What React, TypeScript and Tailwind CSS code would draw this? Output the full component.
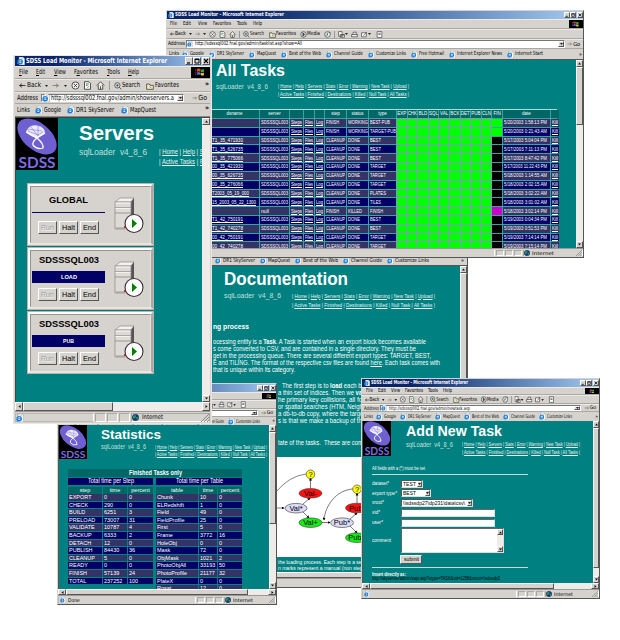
import React, { useLayoutEffect, useRef, useState } from "react";

type Kids = { children?: React.ReactNode; className?: string };

/* A single line of text condensed or stretched to the width of its box. */
function Fit({ className = "", children }: Kids) {
  const box = useRef<HTMLSpanElement>(null);
  const text = useRef<HTMLSpanElement>(null);
  const [scale, setScale] = useState(1);
  useLayoutEffect(() => {
    if (box.current && text.current) {
      setScale(box.current.getBoundingClientRect().width / text.current.getBoundingClientRect().width);
    }
  }, []);
  return (
    <span ref={box} className={`flex shrink-0 items-center leading-none whitespace-nowrap ${className}`}>
      <span ref={text} className="inline-block shrink-0 origin-left" style={{ transform: `scaleX(${scale})` }}>
        {children}
      </span>
    </span>
  );
}

function IE({ className = "size-[7px]" }: { className?: string }) {
  return (
    <svg viewBox="0 0 10 10" className={`shrink-0 ${className}`}>
      <path d="M2.500 0h5l2.200 2.200V10H2.500z" fill="#fff" stroke="#777" strokeWidth=".6" />
      <circle cx="4" cy="5.800" r="2.600" fill="none" stroke="#1a7cd8" strokeWidth="1.700" />
      <path d="M2 5.900h4.500" stroke="#1a7cd8" strokeWidth="1.100" />
      <path d="M.3 8.700C2 3 5.500 1.800 8 2.500" fill="none" stroke="#49a4ea" strokeWidth=".8" />
    </svg>
  );
}

function Globe({ className = "size-[7px]" }: { className?: string }) {
  return (
    <svg viewBox="0 0 10 10" className={`shrink-0 ${className}`}>
      <circle cx="5" cy="5" r="4.6" fill="#1030b8" />
      <path d="M1 3l3-2 2 2-2 3-2 1zM6 5l3-1v3L7 9z" fill="#28a828" />
      <circle cx="5" cy="5" r="4.6" fill="none" stroke="#112" strokeWidth=".6" />
    </svg>
  );
}

function SdssLogo({ className }: { className: string }) {
  return (
    <div className={`relative shrink-0 bg-black ${className}`}>
      <svg viewBox="0 0 42 52" preserveAspectRatio="none" className="size-full">
        <ellipse cx="21" cy="18.500" rx="23" ry="13.5" transform="rotate(40 21 18.500)" fill="#6f60d2" />
        <path d="M10 14Q13 6 21 7.500T29 15L21 20Q15 19 10 14z" fill="#ece9ff" />
        <path d="M10 14l11 6 8-5M21 20q-5 4-4 7 4 5 10 3 1-4-6-10z" fill="none" stroke="#fff" strokeWidth="1.300" />
        <path d="M12 13l10 4 5-3M15 9l7 9M22 8l0 10M11 11l15 2" stroke="#8173d0" strokeWidth=".6" fill="none" />
        <text x="2.5" y="50" textLength="37" lengthAdjust="spacingAndGlyphs" fontFamily="Lato, Liberation Sans, sans-serif" fontWeight="bold" fontSize="15.500" fill="#7b6cdf">SDSS</text>
      </svg>
    </div>
  );
}

function ArrowIcon({ flip = false, className = "w-[6px] h-[5px]" }: { flip?: boolean; className?: string }) {
  return (
    <svg viewBox="0 0 12 8" className={`shrink-0 ${flip ? "rotate-180" : ""} ${className}`}>
      <path d="M5 1L1 4l4 3M1 4h10" fill="none" stroke={flip ? "#777" : "#222"} strokeWidth="1.5" />
    </svg>
  );
}

const glyphs: Record<string, React.ReactNode> = {
  stop: <><circle cx="6" cy="6" r="4.8" fill="#eee" /><path d="M4 4l4 4M8 4L4 8" /></>,
  page: <><path d="M2 1h6l2 2v8H2z" fill="#fff" /><path d="M4 4h4M4 6h2M6 9l2-2" stroke="#26723e" /></>,
  home: <><path d="M1 6l5-5 5 5M3 5v6h6V5" fill="#f4f4e6" /><path d="M6 7v4" /></>,
  search: <><circle cx="5" cy="5" r="4" fill="#dceaf2" /><path d="M3 5h4M5 3v4M8 8l3 3" /></>,
  fav: <><path d="M1 3h4l1 2h5v6H1z" fill="#efeec4" /><path d="M5 7l3 2" stroke="#777" /></>,
  media: <><circle cx="6" cy="6" r="4.8" fill="#d5e9e4" /><path d="M5 3l3 3-3 3z" fill="#344" /></>,
  history: <><circle cx="6" cy="6" r="4.8" fill="#e8f3ee" /><path d="M6 3v4H3M9 1l2 3" /></>,
  mail: <><path d="M1 1h6v8H1zM4 6h7v5H4zM4 6l3 3 4-3" fill="#fff" /></>,
  print: <><path d="M1 6h10v4H1zM3 6l1-4h5v4" fill="#eee" /></>,
  edit: <><path d="M1 3h8v7H1zM4 8l6-6" fill="#fff" /></>,
  discuss: <><path d="M2 1h8v10H2zM4 4h4M4 6h4" fill="#fff" /></>,
};

function Glyph({ n, className = "size-[7px]" }: { n: string; className?: string }) {
  return (
    <svg viewBox="0 0 12 12" fill="none" stroke="#333" strokeWidth="1.1" className={`shrink-0 ${className}`}>
      {glyphs[n]}
    </svg>
  );
}

function Drop() {
  return (
    <svg viewBox="0 0 6 4" className="h-[2px] w-[3px] shrink-0">
      <path d="M0 0h6L3 4z" fill="#222" />
    </svg>
  );
}

function Bevel({ className = "", children }: Kids) {
  return (
    <span className={`flex shrink-0 items-center justify-center border border-t-white border-l-white border-r-[#555] border-b-[#555] bg-[#d6d3ce] ${className}`}>
      {children}
    </span>
  );
}

function Tri({ dir, className = "size-[3px]" }: { dir: "u" | "d" | "l" | "r"; className?: string }) {
  const d = { u: "M0 5h6L3 1z", d: "M0 1h6L3 5z", l: "M5 0v6L1 3z", r: "M1 0v6l4-3z" }[dir];
  return (
    <svg viewBox="0 0 6 6" className={`shrink-0 ${className}`}>
      <path d={d} fill="#111" />
    </svg>
  );
}

function WindowButtons({ big }: { big?: boolean }) {
  const c = big ? "h-[8px] w-[8px]" : "h-[6px] w-[6px]";
  return (
    <div className="ml-auto flex shrink-0">
      <Bevel className={c}><svg viewBox="0 0 6 6" className="size-full"><path d="M1 5h3" stroke="#000" strokeWidth="1.2" /></svg></Bevel>
      <Bevel className={c}><svg viewBox="0 0 6 6" className="size-full"><path d="M1 1h4v4H1zM1 1.5h4" fill="none" stroke="#000" strokeWidth=".9" /></svg></Bevel>
      <Bevel className={`ml-px ${c}`}><svg viewBox="0 0 6 6" className="size-full"><path d="M1 1l4 4M5 1L1 5" stroke="#000" strokeWidth="1.1" /></svg></Bevel>
    </div>
  );
}

function Flag({ className }: { className: string }) {
  return (
    <div className={`ml-auto flex shrink-0 items-center justify-center bg-black ${className}`}>
      <svg viewBox="0 0 10 8" className="h-[75%]">
        <path d="M2 1q1.5-1 3 0v2.6q-1.500-1-3 0z" fill="#e0502c" />
        <path d="M5.500 1q1.500 1 3.200 0v2.600q-1.700 1-3.200 0z" fill="#3fa247" />
        <path d="M2 4.300q1.500-1 3 0v2.600q-1.500-1-3 0z" fill="#4472dd" />
        <path d="M5.500 4.300q1.500 1 3.200 0v2.600q-1.700 1-3.200 0z" fill="#e8c030" />
        <path d="M0 2h1.500M0 4h1.500M0 6h1.500" stroke="#b44" strokeWidth=".8" />
      </svg>
    </div>
  );
}

const rowLine = "flex shrink-0 items-center border-b border-b-[#aaa8a2] border-t border-t-[#eceae6] overflow-hidden";
const gradient = "flex shrink-0 items-center bg-linear-to-r from-[#0a246a] from-20% to-[#a6caf0]";
const frame = "absolute flex flex-col overflow-hidden border border-[#d6d3ce] border-r-[#555] border-b-[#555] bg-[#d6d3ce] font-['DejaVu_Sans_Condensed','DejaVu_Sans',sans-serif] text-black";

function SmallMenu({ className }: { className: string }) {
  return (
    <div className={`${rowLine} text-[5.500px] ${className}`}>
      <Fit className="w-[7px]">File</Fit>
      <Fit className="w-[8px]">Edit</Fit>
      <Fit className="w-[9px]">View</Fit>
      <Fit className="w-[18px]">Favorites</Fit>
      <Fit className="w-[10px]">Tools</Fit>
      <Fit className="w-[9px]">Help</Fit>
      <Flag className="h-full w-[14px]" />
    </div>
  );
}

function SmallToolbar({ className, squeeze = "" }: { className: string; squeeze?: string }) {
  return (
    <div className={`${rowLine} pl-[3px] text-[5.500px] ${className}`}>
      <div className={`flex shrink-0 origin-left items-center ${squeeze}`}>
        <ArrowIcon className="h-[4px] w-[5px]" />
        <Fit className="w-[11px]">Back</Fit>
        <span className="w-[3px]" /><Drop /><span className="w-[3px]" />
        <ArrowIcon flip className="h-[4px] w-[5px]" />
        <span className="w-[3px]" /><Drop /><span className="w-[3px]" />
        <Glyph n="stop" /><span className="w-[3px]" />
        <Glyph n="page" /><span className="w-[3px]" />
        <Glyph n="home" />
        <span className="mx-[3px] h-[7px] w-px bg-[#999]" />
        <Glyph n="search" /><Fit className="w-[14px]">Search</Fit><span className="w-[5px]" />
        <Glyph n="fav" /><Fit className="w-[20px]">Favorites</Fit><span className="w-[4px]" />
        <Glyph n="media" /><Fit className="w-[13px]">Media</Fit><span className="w-[4px]" />
        <Glyph n="history" />
        <span className="mx-[3px] h-[7px] w-px bg-[#999]" />
        <Glyph n="mail" /><Drop /><span className="w-[3px]" />
        <Glyph n="print" /><span className="w-[3px]" />
        <Glyph n="edit" /><Drop /><span className="w-[5px]" />
        <Glyph n="discuss" />
      </div>
    </div>
  );
}

function AddressRow({ className, url, label, input, go }: { className: string; url: React.ReactNode; label: string; input: string; go: string }) {
  return (
    <div className={`${rowLine} ${className}`}>
      <Fit className={label}>Address</Fit>
      <div className="ml-px flex h-[88%] min-w-0 grow items-center border border-r-white border-b-white border-t-[#777] border-l-[#777] bg-white">
        <IE className={input} />
        {url}
        <Bevel className="ml-auto h-full w-[6px]"><Drop /></Bevel>
      </div>
      <div className={`flex shrink-0 items-center justify-end gap-px pr-[3px] ${go}`}>
        <ArrowIcon flip className="h-[4px] w-[5px] -rotate-45" />
        <span>Go</span>
      </div>
    </div>
  );
}

function Link({ w, children, icon }: { w: string; children: string; icon?: string }) {
  return (
    <span className="flex shrink-0 items-center gap-px">
      <IE className={icon} />
      <Fit className={w}>{children}</Fit>
    </span>
  );
}

function VScroll({ className, thumb }: { className: string; thumb?: string }) {
  return (
    <div className={`flex shrink-0 flex-col bg-[#eeece8] ${className}`}>
      <Bevel className="h-[7px] w-full"><Tri dir="u" /></Bevel>
      {thumb && <Bevel className={`w-full ${thumb}`} />}
      <Bevel className="mt-auto h-[7px] w-full"><Tri dir="d" /></Bevel>
    </div>
  );
}

function HScroll({ className, thumb }: { className: string; thumb: string }) {
  return (
    <div className={`flex shrink-0 bg-[#eeece8] ${className}`}>
      <Bevel className="h-full w-[8px]"><Tri dir="l" /></Bevel>
      <Bevel className={`h-full ${thumb}`} />
      <Bevel className="ml-auto h-full w-[8px]"><Tri dir="r" /></Bevel>
    </div>
  );
}

function Status({ className, zone, text, done = "" }: { className: string; zone: string; text: string; done?: string }) {
  return (
    <div className={`flex shrink-0 items-stretch gap-px border-t border-t-[#999] py-px text-[5px] leading-none ${className}`}>
      <div className="flex grow items-center gap-[2px] border-x border-[#bbb8b2] border-r-white pl-px"><IE className="size-[6px]" />{done}</div>
      <div className="w-[8px] border border-[#aaa8a2] border-r-white border-b-white" />
      <div className="w-[8px] border border-[#aaa8a2] border-r-white border-b-white" />
      <div className="w-[8px] border border-[#aaa8a2] border-r-white border-b-white" />
      <div className={`flex items-center gap-[2px] border-x border-[#aaa8a2] border-r-white ${zone}`}>
        <Globe className="size-[6px]" />
        <Fit className={text}>Internet</Fit>
        <svg viewBox="0 0 8 8" className="ml-auto size-[6px]"><path d="M8 0L0 8M8 3L3 8M8 6L6 8" stroke="#888" /></svg>
      </div>
    </div>
  );
}

function Nav({ w, row }: { w: string; row: string }) {
  const u = "underline decoration-[0.5px]";
  const names1 = ["Home", "Help", "Servers", "Stats", "Error", "Warning", "New Task", "Upload"];
  const names2 = ["Active Tasks", "Finished", "Destinations", "Killed", "Null Task", "All Tasks"];
  return (
    <div className="text-[#e6f6f4]">
      {[names1, names2].map((names) => (
        <Fit key={names[0]} className={`${w} ${row}`}>
          |{names.map((n) => <span key={n}> <span className={u}>{n}</span> |</span>)}
        </Fit>
      ))}
    </div>
  );
}

const page = "min-w-0 grow overflow-hidden bg-[#008080] font-['Liberation_Sans',Arial,sans-serif] text-white";

/* ---------- All Tasks ---------- */

const taskCols = "grid grid-cols-[49px_29px_13px_10px_9px_21px_21px_27px_repeat(10,9.6px)_47px_8px] gap-x-px";
const tasks = [
  ["", "SDSSSQL003", "FINISH", "WORKING", "BEST-PUB", "5/20/2003 1:58:13 PM"],
  ["", "SDSSSQL003", "FINISH", "WORKING", "TARGET-PUB", "5/20/2003 0:21:43 AM"],
  ["T1_35_471930", "SDSSSQL003", "CLEANUP", "DONE", "BEST", "5/17/2003 5:04:04 PM"],
  ["T1_35_626735", "SDSSSQL003", "CLEANUP", "DONE", "BEST", "5/17/2003 7:11:13 PM"],
  ["T1_35_775066", "SDSSSQL003", "CLEANUP", "DONE", "BEST", "5/17/2003 8:47:42 PM"],
  ["00_35_421930", "SDSSSQL003", "CLEANUP", "DONE", "TARGET", "5/17/2003 11:22:43 PM"],
  ["00_35_626735", "SDSSSQL003", "CLEANUP", "DONE", "TARGET", "5/18/2003 1:14:55 AM"],
  ["00_35_276066", "SDSSSQL003", "CLEANUP", "DONE", "TARGET", "5/18/2003 2:02:15 AM"],
  ["T2003_05_19_000", "SDSSSQL003", "CLEANUP", "DONE", "PLATES", "5/18/2003 3:02:22 AM"],
  ["15_2003_05_22_1300", "SDSSSQL003", "CLEANUP", "DONE", "TILES", "5/18/2003 3:01:02 AM"],
  ["", "null", "FINISH", "KILLED", "FINISH", "5/18/2003 3:02:14 PM"],
  ["T1_42_750191", "SDSSSQL003", "CLEANUP", "DONE", "BEST", "5/19/2003 0:04:34 PM"],
  ["T1_42_740278", "SDSSSQL003", "CLEANUP", "DONE", "BEST", "5/19/2003 0:51:53 PM"],
  ["00_42_750191", "SDSSSQL003", "CLEANUP", "DONE", "TARGET", "5/19/2003 7:14:14 PM"],
  ["00_42_740278", "SDSSSQL003", "CLEANUP", "DONE", "TARGET", "5/19/2003 7:15:14 PM"],
];

function AllTasks() {
  const cell = "overflow-hidden whitespace-nowrap pl-px";
  return (
    <div className={`${frame} left-[166px] top-[10px] h-[248px] w-[418px] text-[5.500px]`}>
      <div className={`${gradient} h-[8px] pl-px`}>
        <IE className="size-[6px]" />
        <Fit className="ml-px w-[109px] font-bold text-white">SDSS Load Monitor - Microsoft Internet Explorer</Fit>
        <WindowButtons />
      </div>
      <SmallMenu className="h-[10px] gap-[6.300px] pl-[3px]" />
      <SmallToolbar className="h-[10px]" />
      <AddressRow className="h-[10px] pl-px" label="w-[17px]" input="size-[6px]" go="w-[18px] text-[5.500px]"
        url={<Fit className="ml-[2px] w-[107px]">http://sdsssql002.fnal.gov/admin/tasklist.asp?show=All</Fit>} />
      <div className="flex h-[10px] shrink-0 items-center gap-[5px] pl-[2px]">
        <Fit className="w-[10px]">Links</Fit>
        <span className="ml-[-2px]"><Link w="w-[14px]">Google</Link></span>
        <Link w="w-[27px]">DR1 SkyServer</Link>
        <Link w="w-[19px]">MapQuest</Link>
        <Link w="w-[32px]">Best of the Web</Link>
        <Link w="w-[29px]">Channel Guide</Link>
        <Link w="w-[30px]">Customize Links</Link>
        <Link w="w-[25px]">Free Hotmail</Link>
        <Link w="w-[45px]">Internet Explorer News</Link>
        <Link w="w-[28px]">Internet Start</Link>
        <span className="ml-auto pr-px">»</span>
      </div>
      <div className="flex min-h-0 grow border-t border-l border-[#555]">
        <div className={page}>
          <div className="ml-[48px] pt-[1px]">
            <Fit className="h-[18px] w-[69px] text-[16.500px] font-bold">All Tasks</Fit>
            <div className="mt-[4px] flex text-[5.500px]">
              <Fit className="mr-[10px] h-[7px] w-[52px] text-[7px] text-[#c0e0dc]">sqlLoader&nbsp; v4_8_6</Fit>
              <Nav w="w-[131px]" row="h-[8px]" />
            </div>
          </div>
          <div className="ml-[42px] mt-[10px] w-[347px] border-t border-[#a9dcd4] bg-[#35a5a0] text-[5px] leading-[8px]">
            <div className={`${taskCols} h-[8px] text-center text-[4.500px]`}>
              {["dsname", "server", "", "", "", "step", "status", "type", "EXP", "CHK", "BLD", "SQL", "VAL", "BCK", "DET", "PUB", "CLN", "FIN", "date", ""].map((h, i) => (
                <div key={i} className="bg-[#006666]">{h}</div>
              ))}
            </div>
            {tasks.map((t, i) => {
              const c = `${cell} ${i % 2 ? "bg-[#000066]" : "bg-[#333366]"}`;
              const last = i < 2 ? "bg-[#00ff00]" : i === 10 ? "bg-[#cc00cc]" : "bg-black";
              const nameWidth = t[0].length > 15 ? "w-[44px]" : t[0].length > 12 ? "w-[37px]" : "w-[31px]";
              return (
                <div key={i} className={`${taskCols} h-[8.820px] pt-px`}>
                  <div className={c}>{t[0] && <Fit className={`ml-px h-full underline decoration-[0.5px] ${nameWidth}`}>{t[0]}</Fit>}</div>
                  <div className={c}><Fit className={i === 10 ? "h-full w-[8px]" : "h-full w-[27px]"}>{t[1]}</Fit></div>
                  <div className={c}><Fit className="h-full w-[11px] underline">Steps</Fit></div>
                  <div className={c}><Fit className="h-full w-[8px] underline">Files</Fit></div>
                  <div className={c}><Fit className="h-full w-[7px] underline">Log</Fit></div>
                  <div className={c}><Fit className={i < 2 || i === 10 ? "h-full w-[13px]" : "h-full w-[19px]"}>{t[2]}</Fit></div>
                  <div className={c}><Fit className={i < 2 ? "h-full w-[20px]" : i === 10 ? "h-full w-[14px]" : "h-full w-[12px]"}>{t[3]}</Fit></div>
                  <div className={c}><Fit className={i === 1 ? "h-full w-[26px]" : i === 0 ? "h-full w-[20px]" : t[4] === "BEST" || t[4] === "TILES" ? "h-full w-[11px]" : i === 10 ? "h-full w-[13px]" : "h-full w-[16px]"}>{t[4]}</Fit></div>
                  {Array.from({ length: 9 }, (_, k) => (
                    <div key={k} className="bg-[#00ff00] outline-[0.5px] outline-[#8b91c8]" />
                  ))}
                  <div className={last} />
                  <div className={c}><Fit className="h-full w-[43px]">{t[5]}</Fit></div>
                  <div className={c}><Fit className="h-full w-[6px] underline">Kill</Fit></div>
                </div>
              );
            })}
          </div>
        </div>
        <VScroll className="w-[7px]" thumb="h-[58px]" />
      </div>
      <Status className="h-[9px]" zone="w-[60px]" text="w-[22px]" />
    </div>
  );
}

/* ---------- Documentation ---------- */

function Oval({ x, y, fill, label, rx = 11.5, ry = 4.8 }: { x: number; y: number; fill: string; label: string; rx?: number; ry?: number }) {
  return (
    <g>
      <ellipse cx={x} cy={y} rx={rx} ry={ry} fill={fill} stroke="#333" strokeWidth=".6" />
      <text x={x} y={y + 2.7} textAnchor="middle" fontSize="7.500" fontFamily="Liberation Sans, sans-serif" fill="#000">{label}</text>
    </g>
  );
}

function Documentation() {
  const line = "h-[7px]";
  return (
    <div className={`${frame} left-[209px] top-[250px] h-[338px] w-[259px] text-[5.500px]`}>
      <div className="mt-[5px] flex h-[9px] shrink-0 items-center gap-[5px] pl-[5px]">
        <Link w="w-[32px]">DR1 SkyServer</Link>
        <Link w="w-[22px]">MapQuest</Link>
        <Link w="w-[35px]">Best of the Web</Link>
        <Link w="w-[31px]">Channel Guide</Link>
        <Link w="w-[34px]">Customize Links</Link>
        <span className="ml-auto pr-[3px]">»</span>
      </div>
      <div className="flex min-h-0 grow border-t border-[#555]">
        <div className={page}>
          <div className="ml-[14px] pt-[4px]">
            <Fit className="h-[19px] w-[124px] text-[17.500px] font-bold">Documentation</Fit>
            <div className="mt-[2px] flex text-[6px]">
              <Fit className="mr-[11px] h-[9px] w-[57px] text-[8px] text-[#c0e0dc]">sqlLoader&nbsp; v4_8_6</Fit>
              <Nav w="w-[143px]" row="h-[9px]" />
            </div>
          </div>
          <div className="ml-[3px] mt-[13px] text-[6.500px]">
            <Fit className="h-[8px] w-[36px] text-[7px] font-bold">ng process</Fit>
            <div className="mt-[9px]">
              <Fit className={`w-[213px] ${line}`}><span>ocessing entity is a <b>Task</b>. A Task is started when an export block becomes available</span></Fit>
              <Fit className={`w-[203px] ${line}`}>s come converted to CSV, and are contained in a single directory. They must be</Fit>
              <Fit className={`w-[218px] ${line}`}>get in the processing queue. There are several different export types: TARGET, BEST,</Fit>
              <Fit className={`w-[227px] ${line}`}><span>E and TILING. The format of the respective csv files are found <u>here</u>. Each task comes with</span></Fit>
              <Fit className={`w-[82px] ${line}`}>that is unique within its category.</Fit>
            </div>
            <div className="ml-[65px] mt-[9px]">
              <Fit className={`ml-[4px] w-[90px] ${line}`}><span>The first step is to <b>load</b> each block</span></Fit>
              <Fit className={`w-[91px] ${line}`}><span>a thin set of indices. Then we <b>valid</b></span></Fit>
              <Fit className={`w-[91px] ${line}`}>he primary key collisions, all forei</Fit>
              <Fit className={`w-[88px] ${line}`}>or spatial searches (HTM, Neighb</Fit>
              <Fit className={`w-[87px] ${line}`}>a db-to-db copy, where the target</Fit>
              <Fit className={`w-[87px] ${line}`}>s is that we make a backup of the</Fit>
              <Fit className={`mt-[15px] w-[88px] ${line}`}>tate of the tasks.&nbsp; These are comp</Fit>
            </div>
          </div>
          <div className="mt-[10px] flex h-[100px] bg-white pl-[66px]">
            <svg viewBox="276 456 100 100" className="h-[100px] w-[100px]">
              <defs>
                <marker id="tip" viewBox="0 0 6 6" refX="5" refY="3" markerWidth="5" markerHeight="5" orient="auto"><path d="M0 0l6 3-6 3z" /></marker>
              </defs>
              <g fill="none" stroke="#222" strokeWidth=".6" markerEnd="url(#tip)">
                <path d="M276 507h8" /><path d="M303 503l7-6" /><path d="M303 511l6 6" /><path d="M310.500 487v-10" />
                <path d="M322 521.500h8" /><path d="M350 518l7-6" /><path d="M350 525l7 7" /><path d="M357 502v-10" />
                <path d="M353 488C336 489 325 505 324 519" />
              </g>
              <path d="M306 473Q289 475 276 491" fill="none" stroke="#333" strokeWidth=".6" />
              <Oval x={310.5} y={473.3} fill="#ffff00" label="?" rx={4.3} ry={4.3} />
              <Oval x={310.5} y={492.3} fill="#ff1010" label="Val-" />
              <Oval x={296} y={507.2} fill="#dcdcfa" label="Val*" rx={11} />
              <Oval x={310.5} y={521.7} fill="#12ee12" label="Val+" />
              <Oval x={342} y={521.7} fill="#dcdcfa" label="Pub*" />
              <Oval x={357} y={507} fill="#ff1010" label="Pub-" />
              <Oval x={357} y={488.3} fill="#ffff00" label="?" rx={4.3} ry={4.3} />
              <Oval x={357} y={536.7} fill="#12ee12" label="Pub+" />
            </svg>
          </div>
          <div className="ml-[68px] pt-[2px] text-[6px]">
            <Fit className="h-[6px] w-[86px]">the loading process. Each step is a sec</Fit>
            <Fit className="h-[6px] w-[86px]">n marks represent a manual (non step,</Fit>
          </div>
        </div>
        <VScroll className="w-[7px]" thumb="h-[210px]" />
      </div>
      <HScroll className="h-[6px]" thumb="w-[170px]" />
      <Status className="h-[9px]" zone="w-[60px]" text="w-[22px]" />
    </div>
  );
}

/* ---------- Statistics ---------- */

const stepStats = ["EXPORT 0 0", "CHECK 290 0", "BUILD 6251 3", "PRELOAD 73007 31", "VALIDATE 10787 4", "BACKUP 6333 2", "DETACH 12 0", "PUBLISH 84430 36", "CLEANUP 5 0", "READY 0 0", "FINISH 57139 24", "TOTAL 237252 100"];
const tableStats = ["Chunk 10 0", "ELRedshift 1 0", "Field 49 0", "FieldProfile 25 0", "First 5 0", "Frame 3772 16", "HoleObj 0 0", "Mask 72 0", "ObjMask 1021 2", "PhotoObjAll 33193 50", "PhotoProfile 21177 32", "PlateX 0 0", "Rosat 12 0"];

function StatTable({ title, cols, head, rows }: { title: React.ReactNode; cols: string; head: string[]; rows: string[] }) {
  return (
    <div>
      <div className="flex h-[7px] justify-center bg-[#000066] text-[6.500px]">{title}</div>
      <div className={`mt-[2px] grid h-[7px] gap-px text-center text-[5.500px] leading-[7px] ${cols}`}>
        {head.map((h) => <div key={h} className="bg-[#006666]">{h}</div>)}
      </div>
      <div>
        {rows.map((r, i) => (
          <div key={r} className={`grid h-[7.610px] gap-px pb-px text-[5.500px] leading-[6.500px] ${cols}`}>
            {r.split(" ").map((v, k) => (
              <div key={k} className={`pl-px ${i % 2 ? "bg-[#000066]" : "bg-[#333366]"}`}>{v}</div>
            ))}
          </div>
        ))}
      </div>
    </div>
  );
}

function Statistics() {
  return (
    <div className={`${frame} left-[57px] top-[383px] h-[222px] w-[220px] text-[5px]`}>
      <div className={`${gradient} h-[8px] pl-px`}>
        <IE className="size-[6px]" />
        <Fit className="ml-px w-[98px] font-bold text-white">SDSS Load Monitor - Microsoft Internet Explorer</Fit>
        <WindowButtons />
      </div>
      <SmallMenu className="h-[8px] gap-[5px] pl-[3px]" />
      <SmallToolbar className="h-[9px]" squeeze="scale-x-[0.870]" />
      <AddressRow className="h-[8px] pl-px" label="w-[15px]" input="size-[6px]" go="w-[18px] text-[5px]"
        url={<Fit className="ml-[2px] w-[85px]">http://sdsssql002.fnal.gov/admin/stats.asp</Fit>} />
      <div className="flex h-[8px] shrink-0 items-center gap-[4px] pl-[2px]">
        <Fit className="w-[9px]">Links</Fit>
        <Link w="w-[11px]">Google</Link>
        <Link w="w-[23px]">DR1 SkyServer</Link>
        <Link w="w-[17px]">MapQuest</Link>
        <Link w="w-[24px]">Best of the Web</Link>
        <Link w="w-[20px]">Channel Guide</Link>
        <Link w="w-[24px]">Customize Links</Link>
        <span className="ml-auto pr-px">»</span>
      </div>
      <div className="flex min-h-0 grow border-l border-[#555]">
        <div className={page}>
          <div className="flex">
            <SdssLogo className="h-[34px] w-[28px]" />
            <div className="ml-[14px] pt-[2px]">
              <Fit className="h-[16px] w-[60px] text-[13.500px] font-bold">Statistics</Fit>
              <div className="mt-[1px] flex text-[5px]">
                <Fit className="mr-[9px] h-[7px] w-[45px] text-[6.500px] text-[#c0e0dc]">sqlLoader&nbsp; v4_8_6</Fit>
                <Nav w="w-[112px]" row="h-[7px]" />
              </div>
            </div>
          </div>
          <div className="ml-[9px] mt-[10px] w-[174px]">
            <div className="flex h-[8px] justify-center bg-[#006666] text-[6.500px] font-bold"><Fit className="w-[53px]">Finished Tasks only</Fit></div>
            <div className="mt-px flex gap-[3px]">
              <StatTable title={<Fit className="w-[46px]">Total time per Step</Fit>} cols="grid-cols-[34px_24px_25px]" head={["step", "time", "percent"]} rows={stepStats} />
              <StatTable title={<Fit className="w-[47px]">Total time per Table</Fit>} cols="grid-cols-[42px_18px_24px]" head={["table", "time", "percent"]} rows={tableStats} />
            </div>
          </div>
        </div>
        <VScroll className="w-[7px]" thumb="h-[92px]" />
      </div>
      <HScroll className="h-[6px]" thumb="w-[182px]" />
      <Status className="h-[9px]" zone="w-[52px]" text="w-[20px]" done="Done" />
    </div>
  );
}

/* ---------- Add New Task ---------- */

function Select({ className, children }: Kids) {
  return (
    <div className={`flex h-[8px] shrink-0 items-center border border-[#555] border-r-[#ddd] border-b-[#ddd] bg-white pl-px text-black ${className}`}>
      {children}
      <Bevel className="ml-auto h-full w-[5px]"><Drop /></Bevel>
    </div>
  );
}

function Field({ w, label, h, children }: { w: string; label: string; h: string; children: React.ReactNode }) {
  return (
    <div className={`flex items-center ${h}`}>
      <div className="w-[29px] shrink-0"><Fit className={w}>{label}</Fit></div>
      {children}
    </div>
  );
}

function AddNewTask() {
  const input = "h-[8px] w-[94px] border border-[#666] border-r-[#ddd] border-b-[#ddd] bg-white";
  return (
    <div className={`${frame} left-[361px] top-[378px] h-[221px] w-[239px] text-[5px]`}>
      <div className={`${gradient} h-[8px] pl-[2px]`}>
        <IE className="size-[6px]" />
        <Fit className="ml-px w-[97px] text-[5.500px] font-bold text-white">SDSS Load Monitor - Microsoft Internet Explorer</Fit>
        <WindowButtons />
      </div>
      <SmallMenu className="h-[8px] gap-[5px] pl-[4px]" />
      <SmallToolbar className="h-[9px]" squeeze="scale-x-[0.890]" />
      <AddressRow className="h-[8px] pl-[2px]" label="w-[15px]" input="size-[6px]" go="w-[18px] text-[5px]"
        url={<Fit className="ml-[2px] w-[81px]">http://sdsssql002.fnal.gov/admin/newtask.asp</Fit>} />
      <div className="flex h-[9px] shrink-0 items-center gap-[4px] pl-[2px]">
        <Fit className="w-[9px]">Links</Fit>
        <span className="ml-[-1px]"><Link w="w-[12px]">Google</Link></span>
        <Link w="w-[23px]">DR1 SkyServer</Link>
        <Link w="w-[17px]">MapQuest</Link>
        <Link w="w-[27px]">Best of the Web</Link>
        <Link w="w-[24px]">Channel Guide</Link>
        <Link w="w-[25px]">Customize Links</Link>
        <span className="ml-auto pr-px">»</span>
      </div>
      <div className="flex min-h-0 grow border-l border-[#555]">
        <div className={page}>
          <div className="flex">
            <SdssLogo className="h-[35px] w-[28px]" />
            <div className="ml-[15px] pt-[2px]">
              <Fit className="h-[17px] w-[96px] text-[14.500px] font-bold">Add New Task</Fit>
              <div className="mt-[1px] flex text-[5.500px]">
                <Fit className="mr-[9px] h-[7px] w-[47px] text-[7px] text-[#c0e0dc]">sqlLoader&nbsp; v4_8_6</Fit>
                <Nav w="w-[118px]" row="h-[7.500px]" />
              </div>
            </div>
          </div>
          <div className="ml-[9px] mt-[9px] text-[5.500px]">
            <Fit className="h-[6px] w-[53px] text-[5px]">All fields with a (*) must be set</Fit>
            <div className="mt-[3px] mb-[4px] h-px w-[156px] bg-[#c2ded8]" />
            <Field w="w-[17px]" label="dataset*" h="h-[9.500px]"><Select className="w-[22px]"><Fit className="w-[13px] text-[6px]">TEST</Fit></Select></Field>
            <Field w="w-[25px]" label="export type*" h="h-[9.500px]"><Select className="w-[30px]"><Fit className="w-[13px] text-[6px]">BEST</Fit></Select></Field>
            <Field w="w-[12px]" label="xroot*" h="h-[9.500px]"><Select className="w-[72px]"><Fit className="w-[62px] text-[6px]">\\sdssdp27\dp231\data\csv\</Fit></Select></Field>
            <Field w="w-[8px]" label="xid*" h="h-[10px]"><div className={input} /></Field>
            <Field w="w-[11px]" label="user*" h="h-[10px]"><div className={input} /></Field>
            <Field w="w-[19px]" label="comment" h="h-[26px]">
              <div className="flex h-[25px] w-[103px] justify-end border border-[#666] border-r-[#ddd] border-b-[#ddd] bg-white">
                <div className="flex w-[6px] flex-col justify-between bg-[#eeece8]">
                  <Bevel className="h-[6px]"><Tri dir="u" /></Bevel>
                  <Bevel className="h-[6px]"><Tri dir="d" /></Bevel>
                </div>
              </div>
            </Field>
            <Bevel className="ml-[28px] mt-px h-[9px] w-[22px] text-[6px] text-black"><Fit className="w-[15px]">submit</Fit></Bevel>
            <div className="mt-[3px] mb-[4px] h-px w-[156px] bg-[#c2ded8]" />
            <Fit className="h-[5px] w-[34px] text-[5px] font-bold">Insert directly as:</Fit>
            <Fit className="h-[5px] w-[128px] text-[4.500px] text-black">http://skyserver/admin/xapi.asp?xtype=TASK&amp;xid=1258&amp;xroot=\\sdssdp3</Fit>
          </div>
        </div>
        <VScroll className="w-[6px]" thumb="h-[140px]" />
      </div>
      <HScroll className="h-[6px]" thumb="w-[184px]" />
      <Status className="h-[9px]" zone="w-[54px]" text="w-[19px]" />
    </div>
  );
}

/* ---------- Servers ---------- */

function ServerIcon() {
  return (
    <svg viewBox="0 0 30 38" className="h-[38px] w-[30px]">
      <path d="M1 5l5-4h14l-3 4z" fill="#f4f3ef" stroke="#888" strokeWidth=".7" />
      <path d="M17 5l3-4v29l-3 3z" fill="#555" />
      <path d="M1 5h16v27H1z" fill="#dedbd6" stroke="#888" strokeWidth=".7" />
      <path d="M1 10.500h16M1 16h16M2 31h9" stroke="#888" strokeWidth=".8" />
      <path d="M1.500 11.300h15M1.500 6h15" stroke="#fff" strokeWidth=".8" />
      <rect x="10" y="29" width="2" height="2" fill="#e22" />
      <circle cx="20" cy="26.500" r="9" fill="#fff" stroke="#333" strokeWidth="1.100" />
      <path d="M18 22v9l5-4.500z" fill="#008000" />
    </svg>
  );
}

function ServerCard({ name, w, load, h }: { name: string; w: string; load?: React.ReactNode; h: string }) {
  return (
    <div className={`flex w-[125px] shrink-0 border-2 border-white border-r-[#aaa8a2] border-b-[#e8e6e2] bg-[#d6d3ce] text-black outline-1 outline-[#b7b4ae] ${h}`}>
      <div className="flex w-full border border-[#96938e] border-r-[#e5e3df] border-b-[#d6d3ce]">
        <div className="ml-px w-[73px]">
          <div className={`flex justify-center text-[9px] font-bold ${load ? "h-[19px] pt-[5px]" : "h-[23px] pt-[9px]"}`}><Fit className={`h-[9px] ${w}`}>{name}</Fit></div>
          {load
            ? <div className="mt-[1px] flex h-[12px] items-center justify-center bg-[#000066] text-[6px] font-bold text-white">{load}</div>
            : <div className="mt-[2px] mb-[8px] h-px bg-[#000066]" />}
          <div className={`ml-[6px] flex gap-[2px] text-[8px] ${load ? "mt-[5px]" : "mt-0"}`}>
            <Bevel className="h-[13px] w-[19px] text-[#999] [text-shadow:0.5px_0.5px_#fff]"><Fit className="w-[13px]">Run</Fit></Bevel>
            <Bevel className="h-[13px] w-[19px]"><Fit className="w-[13px]">Halt</Fit></Bevel>
            <Bevel className="h-[13px] w-[19px]"><Fit className="w-[13px]">End</Fit></Bevel>
          </div>
        </div>
        <div className="ml-[9px] mt-[10px]"><ServerIcon /></div>
      </div>
    </div>
  );
}

function Servers() {
  return (
    <div className={`${frame} left-[13px] top-[55px] h-[369px] w-[199px] px-px text-[7px] outline-1 -outline-offset-1 outline-[#e8e6e2]`}>
      <div className={`${gradient} h-[10px] pl-[2px]`}>
        <IE className="size-[8px]" />
        <Fit className="ml-px w-[141px] text-[7px] font-bold text-white">SDSS Load Monitor - Microsoft Internet Explorer</Fit>
        <WindowButtons big />
      </div>
      <div className={`${rowLine} h-[13px] gap-[8.400px] pl-[4px]`}>
        <Fit className="w-[9px]"><u>F</u>ile</Fit>
        <Fit className="w-[9px]"><u>E</u>dit</Fit>
        <Fit className="w-[12px]"><u>V</u>iew</Fit>
        <Fit className="w-[24px]">F<u>a</u>vorites</Fit>
        <Fit className="w-[13px]"><u>T</u>ools</Fit>
        <Fit className="w-[11px]"><u>H</u>elp</Fit>
        <Flag className="h-full w-[19px]" />
      </div>
      <div className={`${rowLine} h-[13px] pl-[4px]`}>
        <ArrowIcon className="h-[5px] w-[7px]" />
        <Fit className="ml-px w-[14px]">Back</Fit>
        <span className="w-[4px]" /><Drop /><span className="w-[4px]" />
        <ArrowIcon flip className="h-[5px] w-[7px]" />
        <span className="w-[5px]" /><Drop /><span className="w-[4px]" />
        <Glyph n="stop" className="size-[9px]" /><span className="w-[3px]" />
        <Glyph n="page" className="size-[9px]" /><span className="w-[4px]" />
        <Glyph n="home" className="size-[9px]" />
        <span className="mx-[4px] h-[9px] w-px bg-[#999]" />
        <Glyph n="search" className="size-[8px]" /><Fit className="w-[18px]">Search</Fit><span className="w-[6px]" />
        <Glyph n="fav" className="size-[8px]" /><Fit className="ml-px w-[24px]">Favorites</Fit>
        <span className="ml-auto self-start pr-px leading-[8px] font-bold">»</span>
      </div>
      <AddressRow className="h-[12px] pl-[2px]" label="w-[21px] mr-[2px]" input="size-[8px]" go="w-[26px] text-[7px]"
        url={<Fit className="ml-px w-[123px]">http://sdsssql002.fnal.gov/admin/showservers.a</Fit>} />
      <div className="flex h-[13px] shrink-0 items-center gap-[6px] border-b border-[#888] pl-[2px]">
        <Fit className="w-[13px]">Links</Fit>
        <span className="ml-[-1px]"><Link icon="size-[8px]" w="w-[17px]">Google</Link></span>
        <Link icon="size-[8px]" w="w-[38px]">DR1 SkyServer</Link>
        <span className="ml-px"><Link icon="size-[8px]" w="w-[26px]">MapQuest</Link></span>
        <span className="ml-auto self-start pr-px leading-[8px] font-bold">»</span>
      </div>
      <div className="flex min-h-0 grow border-t border-l border-[#444]">
        <div className={page}>
          <div className="flex">
            <SdssLogo className="h-[52px] w-[42px]" />
            <div className="ml-[21px] pt-[4px]">
              <Fit className="h-[22px] w-[75px] text-[20px] font-bold">Servers</Fit>
              <div className="mt-[3px] flex text-[6.500px]">
                <Fit className="mr-[12px] h-[10px] w-[68px] text-[9px] text-[#c0e0dc]">sqlLoader&nbsp; v4_8_6</Fit>
                <Nav w="w-[181px]" row="h-[10px]" />
              </div>
            </div>
          </div>
          <div className="ml-[12px] mt-[14px] flex flex-col gap-[3px]">
            <ServerCard name="GLOBAL" w="w-[39px]" h="h-[61px]" />
            <ServerCard name="SDSSSQL003" w="w-[60px]" h="h-[61px]" load={<Fit className="w-[16px]">LOAD</Fit>} />
            <ServerCard name="SDSSSQL003" w="w-[60px]" h="h-[61px]" load={<Fit className="w-[11px]">PUB</Fit>} />
          </div>
        </div>
        <VScroll className="w-[8px]" />
      </div>
      <HScroll className="h-[9px]" thumb="w-[90px]" />
      <div className="flex h-[12px] shrink-0 gap-px border-t border-[#999] py-px">
        <div className="flex grow items-center border border-[#bbb8b2] border-r-white"><IE className="size-[8px]" /></div>
        <div className="w-[11px] border border-[#aaa8a2] border-r-white border-b-white" />
        <div className="w-[11px] border border-[#aaa8a2] border-r-white border-b-white" />
        <div className="w-[11px] border border-[#aaa8a2] border-r-white border-b-white" />
        <div className="flex w-[79px] items-center gap-[3px] border border-[#aaa8a2] border-b-white">
          <Globe className="size-[7px]" />
          <Fit className="w-[21px] text-[6.500px]">Internet</Fit>
          <svg viewBox="0 0 8 8" className="ml-auto size-[8px]"><path d="M8 0L0 8M8 3L3 8M8 6L6 8" stroke="#888" /></svg>
        </div>
      </div>
    </div>
  );
}

export default function App() {
  return (
    <div className="relative h-[640px] w-[620px] overflow-hidden bg-white">
      <Documentation />
      <AllTasks />
      <Statistics />
      <AddNewTask />
      <Servers />
    </div>
  );
}
